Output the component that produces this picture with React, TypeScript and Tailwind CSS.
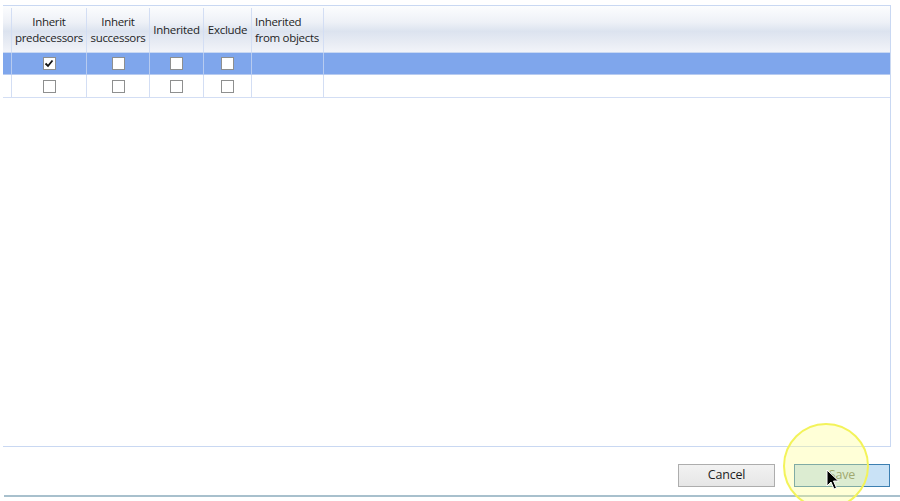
import React from "react";

const Box = ({ checked }: { checked?: boolean }) => (
  <div className="w-[13px] h-[13px] border border-[#8e8f8f] bg-white flex items-center justify-center">
    {checked && (
      <svg width="10" height="9" viewBox="0 0 10 9">
        <path d="M1.5 4.5 L4 7 L8.5 1.5" fill="none" stroke="#111" strokeWidth="1.8" />
      </svg>
    )}
  </div>
);

const widths = ["w-[9px]", "w-[75px]", "w-[63px]", "w-[54px]", "w-[48px]", "w-[72px]"];

export default function App() {
  const font = { fontFamily: '"Open Sans", "Noto Sans", sans-serif' };
  const row = (selected: boolean, first: boolean) => (
    <div
      className={`flex ${first ? "h-[22px]" : "h-[23px]"} border-b ${selected ? "bg-[#7fa6ec] border-[#b7cbf0]" : "bg-white border-[#d3def4]"}`}
    >
      <div className={`${widths[0]} border-r ${selected ? "border-[#b7cbf0]" : "border-[#d3def4]"}`} />
      {[1, 2, 3, 4].map((i) => (
        <div
          key={i}
          className={`${widths[i]} border-r ${selected ? "border-[#b7cbf0]" : "border-[#d3def4]"} flex items-center justify-center`}
        >
          <Box checked={first && i === 1} />
        </div>
      ))}
      <div className={`${widths[5]} border-r ${selected ? "border-[#b7cbf0]" : "border-[#d3def4]"}`} />
      <div className="flex-1" />
    </div>
  );
  return (
    <div className="relative w-[900px] h-[501px] bg-white overflow-hidden text-[#1e1e1e]" style={font}>
      <div className="flex flex-col">
        <div className="mt-[5px] ml-[3px] w-[888px] h-[442px] border-t border-r border-b border-[#c9d8f2] bg-white flex flex-col">
          <div className="flex h-[47px] pt-[2px] border-b border-[#c9d8f2] bg-[linear-gradient(to_bottom,#fcfdfe_0%,#eef1f7_35%,#dce3ef_55%,#e8ecf4_80%,#f2f4f9_100%)] text-[11.5px] tracking-[-0.3px] leading-[16px]">
            <div className={`${widths[0]} border-r border-[#d3def4]`} />
            <div className={`${widths[1]} border-r border-[#d3def4] flex items-center justify-center text-center`}>
              Inherit<br />predecessors
            </div>
            <div className={`${widths[2]} border-r border-[#d3def4] flex items-center justify-center text-center`}>
              Inherit<br />successors
            </div>
            <div className={`${widths[3]} border-r border-[#d3def4] flex items-center justify-center text-center`}>
              Inherited
            </div>
            <div className={`${widths[4]} border-r border-[#d3def4] flex items-center justify-center text-center`}>
              Exclude
            </div>
            <div className={`${widths[5]} border-r border-[#d3def4] flex items-center pl-[3px]`}>
              Inherited<br />from objects
            </div>
            <div className="flex-1" />
          </div>
          {row(true, true)}
          {row(false, false)}
        </div>
        <div className="mt-[17px] flex justify-end pr-[10px] gap-[19px]">
          <div className="w-[97px] h-[23px] border border-[#adadad] bg-[linear-gradient(to_bottom,#f2f2f2,#e6e6e6)] flex items-center justify-center text-[12.5px] tracking-[-0.2px]">
            Cancel
          </div>
          <div className="w-[96px] h-[23px] border border-[#3c7fb1] bg-[#c9e2f6] flex items-center justify-center text-[12.5px] tracking-[-0.2px] text-[#6d7a60]">
            Save
          </div>
        </div>
        <div className="mt-[8px] ml-[4px] h-[2px] bg-[#a8c0cd]" />
      </div>
      <div className="absolute left-[783px] top-[423px] w-[86px] h-[86px] rounded-full border-2 border-[#f3f35a] bg-[rgba(255,255,140,0.35)]" />
      <svg className="absolute left-[826px] top-[469px]" width="13" height="21" viewBox="0 0 13 21">
        <path d="M1 1 L1 17 L5 13 L8 20 L10.5 19 L7.5 12 L12.5 12 Z" fill="#000" stroke="#fff" strokeWidth="1" strokeLinejoin="round" />
      </svg>
    </div>
  );
}
